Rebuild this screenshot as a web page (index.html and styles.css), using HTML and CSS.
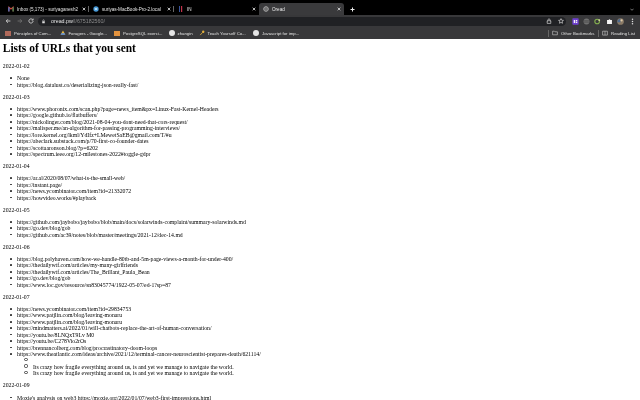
FILE: index.html
```html
<!DOCTYPE html>
<html lang="en">
<head>
<meta charset="utf-8">
<title>Oread</title>
<link rel="stylesheet" href="styles.css">
</head>
<body>
<div class="chrome">
  <div class="tabstrip">
    <div class="tab sep-right"><svg class="fav" viewBox="0 0 10 10"><path d="M1.500 9V2L5 5l3.500-3v7" fill="none" stroke="#c9463e" stroke-width="1.800"/><path d="M1.500 9V2" stroke="#4a86e8" stroke-width="1.800"/><path d="M8.500 9V2" stroke="#3a9d5d" stroke-width="1.800"/></svg><span class="tabtitle">Inbox (5,173) - suriyaganesh2</span><svg class="x" viewBox="0 0 6 6"><path d="M1 1l4 4M5 1L1 5"/></svg></div>
    <div class="tab sep-right"><svg class="fav" viewBox="0 0 10 10"><circle cx="5" cy="5" r="4.400" fill="#4a9bd8"/><path d="M3 3.500h4v3H3z" fill="#bfe0f5"/></svg><span class="tabtitle">suriyas-MacBook-Pro-2.local</span><svg class="x" viewBox="0 0 6 6"><path d="M1 1l4 4M5 1L1 5"/></svg></div>
    <div class="tab"><svg class="fav" viewBox="0 0 10 10"><path d="M2.500 0v10" stroke="#3d5fb0" stroke-width="1.500"/><path d="M6 0v10" stroke="#c2334a" stroke-width="2"/></svg><span class="tabtitle">IN</span><svg class="x" viewBox="0 0 6 6"><path d="M1 1l4 4M5 1L1 5"/></svg></div>
    <div class="tab active"><svg class="fav" viewBox="0 0 10 10"><circle cx="5" cy="5" r="3.800" fill="none" stroke="#c0c0c0" stroke-width="1.400"/><path d="M1 5h8M5 1v8" stroke="#c0c0c0" stroke-width=".8"/></svg><span class="tabtitle">Oread</span><svg class="x" viewBox="0 0 6 6"><path d="M1 1l4 4M5 1L1 5"/></svg></div>
    <svg class="newtab" viewBox="0 0 10 10"><path d="M5 1v8M1 5h8" stroke="#f0f0f0" stroke-width="2"/></svg>
    <span class="spacer"></span>
    <svg class="chev" viewBox="0 0 10 6"><path d="M1 1l4 4 4-4" fill="none" stroke="#bbb" stroke-width="1.600"/></svg>
  </div>
  <div class="toolbar">
    <svg class="nav" viewBox="0 0 10 10"><path d="M9 5H2M5 2L2 5l3 3" fill="none" stroke="#e3e3e3" stroke-width="1.300"/></svg>
    <svg class="nav" viewBox="0 0 10 10"><path d="M1 5h7M5 2l3 3-3 3" fill="none" stroke="#777" stroke-width="1.300"/></svg>
    <svg class="nav" viewBox="0 0 10 10"><path d="M8.500 5a3.500 3.500 0 1 1-1-2.500M8.500 1v2.500H6" fill="none" stroke="#e3e3e3" stroke-width="1.300"/></svg>
    <div class="omnibox">
      <svg class="lock" viewBox="0 0 10 10"><path d="M2.500 4.500h5v4h-5z" fill="#ddd"/><path d="M3.500 4.500V3a1.500 1.500 0 0 1 3 0v1.500" fill="none" stroke="#ddd"/></svg>
      <span class="url"><b>oread.pw</b>/l/675182560/</span>
      <span class="spacer"></span>
      <svg class="omni-ic" viewBox="0 0 10 10"><path d="M5 1L2.500 4H4v1H2v4h6V5H6V4h1.500z" fill="none" stroke="#ddd" stroke-width="1.100"/></svg>
      <svg class="omni-ic" viewBox="0 0 10 10"><path d="M5 1l1.200 2.700 2.900.3-2.200 1.900.7 2.900L5 7.300 2.400 8.800l.7-2.900L.9 4l2.900-.3z" fill="none" stroke="#ddd" stroke-width="1.100"/></svg>
    </div>
    <div class="exts">
      <svg class="ext" viewBox="0 0 10 10"><rect x=".5" y=".5" width="9" height="9" rx="1" fill="#6d3fd0"/><path d="M2.500 3H4.500v4H2.500zM5.500 3H7.500v1.500H5.500zM5.500 5.500H7.500V7H5.500z" fill="#f2f2f2"/></svg>
      <svg class="ext" viewBox="0 0 10 10"><circle cx="5" cy="5" r="4.200" fill="#707070"/><path d="M1.500 4h7M1.500 6h7" stroke="#3a3a3a" stroke-width=".7"/></svg>
      <svg class="ext" viewBox="0 0 10 10"><circle cx="4.500" cy="5" r="3.300" fill="none" stroke="#85b04f" stroke-width="1.500"/><circle cx="7.500" cy="3" r="1.300" fill="#d8d8a8"/></svg>
      <svg class="ext" viewBox="0 0 10 10"><path d="M1.500 3h2.300a1.200 1.200 0 0 1 2.400 0h2.300v5.500h-7z" fill="#f5f5f5"/></svg>
      <svg class="ext" viewBox="0 0 10 10"><circle cx="5" cy="5" r="4.800" fill="#8a7a66"/><path d="M.5 6a4.500 4.500 0 0 1 4.500-5v5z" fill="#4f6a8c"/><circle cx="6.500" cy="3.500" r="1.600" fill="#e0cba8"/></svg>
      <svg class="ext" viewBox="0 0 10 10"><circle cx="5" cy="1.700" r="1.100" fill="#ddd"/><circle cx="5" cy="5" r="1.100" fill="#ddd"/><circle cx="5" cy="8.300" r="1.100" fill="#ddd"/></svg>
    </div>
  </div>
  <div class="bookmarks">
    <span class="bm wide"><i class="bi b-a"></i>Principles of Com...</span>
    <span class="bm wide"><svg class="bs" viewBox="0 0 10 10"><path d="M5 1l4 7H1z" fill="#e8b93c"/><path d="M1 8h8L7.500 5.500h-5z" fill="#4a86e8"/></svg>Foragers - Google...</span>
    <span class="bm wide"><i class="bi b-c"></i>PostgreSQL exerci...</span>
    <span class="bm short"><i class="bi b-d"></i>zhangin</span>
    <span class="bm wide"><svg class="bs" viewBox="0 0 10 10"><circle cx="7" cy="3" r="2" fill="#e6b23a"/><path d="M6 4L2 8.500" stroke="#e6b23a" stroke-width="1.400"/></svg>Teach Yourself Co...</span>
    <span class="bm"><i class="bi b-d"></i>Javascript for imp...</span>
    <span class="spacer"></span>
    <span class="sep"></span>
    <span class="bm"><svg class="bs" viewBox="0 0 10 10"><path d="M1 2h3l1 1h4v5H1z" fill="none" stroke="#ccc"/></svg>Other Bookmarks</span>
    <span class="sep"></span>
    <span class="bm"><svg class="bs" viewBox="0 0 10 10"><path d="M1 2h8v6.500H1zM5 2v6.500" fill="none" stroke="#ccc"/></svg>Reading List</span>
  </div>
</div>
<main class="page">
  <h1>Lists of URLs that you sent</h1>
  <p>2022-01-02</p>
  <ul>
    <li>None</li>
    <li>https://blog.datalust.co/deserializing-json-really-fast/</li>
  </ul>
  <p>2022-01-03</p>
  <ul>
    <li>https://www.phoronix.com/scan.php?page=news_item&amp;px=Linux-Fast-Kernel-Headers</li>
    <li>https://google.github.io/flatbuffers/</li>
    <li>https://nickolinger.com/blog/2021-08-04-you-dont-need-that-cors-request/</li>
    <li>https://malisper.me/an-algorithm-for-passing-programming-interviews/</li>
    <li>https://lore.kernel.org/lkml/YdIfz+LMewetSaEB@gmail.com/T/#u</li>
    <li>https://abeclark.substack.com/p/70-first-co-founder-dates</li>
    <li>https://scottaaronson.blog/?p=6202</li>
    <li>https://spectrum.ieee.org/12-milestones-2022#toggle-gdpr</li>
  </ul>
  <p>2022-01-04</p>
  <ul>
    <li>https://ar.al/2020/08/07/what-is-the-small-web/</li>
    <li>https://instant.page/</li>
    <li>https://news.ycombinator.com/item?id=21332072</li>
    <li>https://howvideo.works/#playback</li>
  </ul>
  <p>2022-01-05</p>
  <ul>
    <li>https://github.com/jaybobo/jaybobo/blob/main/docs/solarwinds-complaint/summary-solarwinds.md</li>
    <li>https://go.dev/blog/gob</li>
    <li>https://github.com/ac39/notes/blob/master/meetings/2021-12/dec-14.md</li>
  </ul>
  <p>2022-01-06</p>
  <ul>
    <li>https://blog.polyhaven.com/how-we-handle-80tb-and-5m-page-views-a-month-for-under-400/</li>
    <li>https://thedailywtf.com/articles/my-many-girlfriends</li>
    <li>https://thedailywtf.com/articles/The_Brillant_Paula_Bean</li>
    <li>https://go.dev/blog/gob</li>
    <li>https://www.loc.gov/resource/sn83045774/1922-05-07/ed-1?sp=87</li>
  </ul>
  <p>2022-01-07</p>
  <ul>
    <li>https://news.ycombinator.com/item?id=29834753</li>
    <li>https://www.patjlin.com/blog/leaving-monaru</li>
    <li>https://www.patjlin.com/blog/leaving-monaru</li>
    <li>https://mindmatters.ai/2022/01/will-chatbots-replace-the-art-of-human-conversation/</li>
    <li>https://youtu.be/8LNQxT9Lv M0</li>
    <li>https://youtu.be/C278Vio2rOs</li>
    <li>https://brennancolberg.com/blog/procrastinatory-doom-loops</li>
    <li>https://www.theatlantic.com/ideas/archive/2021/12/terminal-cancer-neuroscientist-prepares-death/621114/
      <ul>
        <li></li>
        <li>Its crazy how fragile everything around us, is and yet we manage to navigate the world.</li>
        <li>Its crazy how fragile everything around us, is and yet we manage to navigate the world.</li>
      </ul>
    </li>
  </ul>
  <p>2022-01-09</p>
  <ul>
    <li>Moxie's analysis on web3 https://moxie.org/2022/01/07/web3-first-impressions.html</li>
  </ul>
</main>
</body>
</html>
```
FILE: styles.css
```css
html, body { margin: 0; height: 400px; overflow: hidden; background: #fff; }
body { display: flex; flex-direction: column; filter: blur(0.3px); }
.chrome { font-family: "Liberation Sans", Arial, sans-serif; color: #e2e2e2; font-size: 4.600px; flex: none; }
.spacer { flex: 1; }

.tabstrip { height: 15px; background: #000; display: flex; align-items: flex-end; padding-left: 4px; box-sizing: border-box; }
.tab { width: 85px; height: 12px; display: flex; align-items: center; gap: 3.500px; padding: 0 3.500px; box-sizing: border-box; flex: none; }
.sep-right { position: relative; }
.sep-right::after { content: ""; position: absolute; right: 0; top: 3px; width: .7px; height: 6px; background: #666; }
.tab.active { background: #3a3a3c; border-radius: 3px 3px 0 0; color: #e8e8e8; }
.tabtitle { flex: 1; min-width: 0; white-space: nowrap; }
.fav { width: 6px; height: 6px; flex: none; }
.x { width: 4px; height: 4px; flex: none; fill: none; stroke: #d5d5d5; stroke-width: 1.300; }
.newtab { width: 5px; height: 5px; margin: 0 0 3.500px 5.500px; flex: none; }
.chev { width: 4px; height: 3px; margin: 0 6px 4.500px 0; flex: none; }

.toolbar { height: 12px; background: #38383a; display: flex; align-items: center; padding: 0 4.500px 0 5px; }
.nav { width: 6px; height: 6px; margin-right: 5.500px; flex: none; }
.nav:nth-of-type(3) { margin-right: 4px; }
.omnibox { flex: 1; height: 9px; background: #202124; border-radius: 5px; display: flex; align-items: center; padding: 0 2px 0 3px; margin-right: 5.500px; }
.lock { width: 5px; height: 5px; margin-right: 5px; flex: none; }
.url { color: #8a8a8a; font-size: 5.300px; white-space: nowrap; }
.url b { color: #e6e6e6; font-weight: normal; }
.omni-ic { width: 6px; height: 6px; margin-left: 6px; flex: none; }
.exts { display: flex; align-items: center; gap: 4.400px; }
.ext { width: 7px; height: 7px; flex: none; }

.bookmarks { height: 12px; background: #38383a; display: flex; align-items: center; padding: 0 5px; gap: 9.500px; box-sizing: border-box; font-size: 4.300px; }
.bm { display: flex; align-items: center; gap: 3px; white-space: nowrap; }
.bm.wide { width: 45px; }
.bm.short { width: 20.500px; }
.bi { width: 6px; height: 5px; display: block; flex: none; }
.bs { width: 6px; height: 6px; flex: none; }
.b-a { background: #b0695a; }
.b-c { background: #e2923e; }
.b-d { background: #e5e5e5; border-radius: 50%; height: 6px; }
.sep { width: .7px; height: 7px; background: #666; margin: 0 -6px; }

.page { flex: 1; min-height: 0; overflow: hidden; padding: 2.800px; font-family: "Liberation Serif", "Times New Roman", serif; font-size: 5.740px; line-height: 6.430px; color: #000; }
h1 { font-size: 11.450px; line-height: 13px; margin: 0 0 8.300px; font-weight: bold; }
p { margin: 5.690px 0; }
ul { margin: 5.690px 0; padding-left: 14.300px; list-style: none; }
li { min-height: 6.430px; }
li::before { content: ""; display: inline-block; width: 1.700px; height: 1.700px; border-radius: 50%; background: #333; margin: 0 5.300px 0 -7px; vertical-align: 1.200px; }
ul ul { margin: 0; }
ul ul li::before { background: none; border: .4px solid #444; width: 1.200px; height: 1.200px; }
```
